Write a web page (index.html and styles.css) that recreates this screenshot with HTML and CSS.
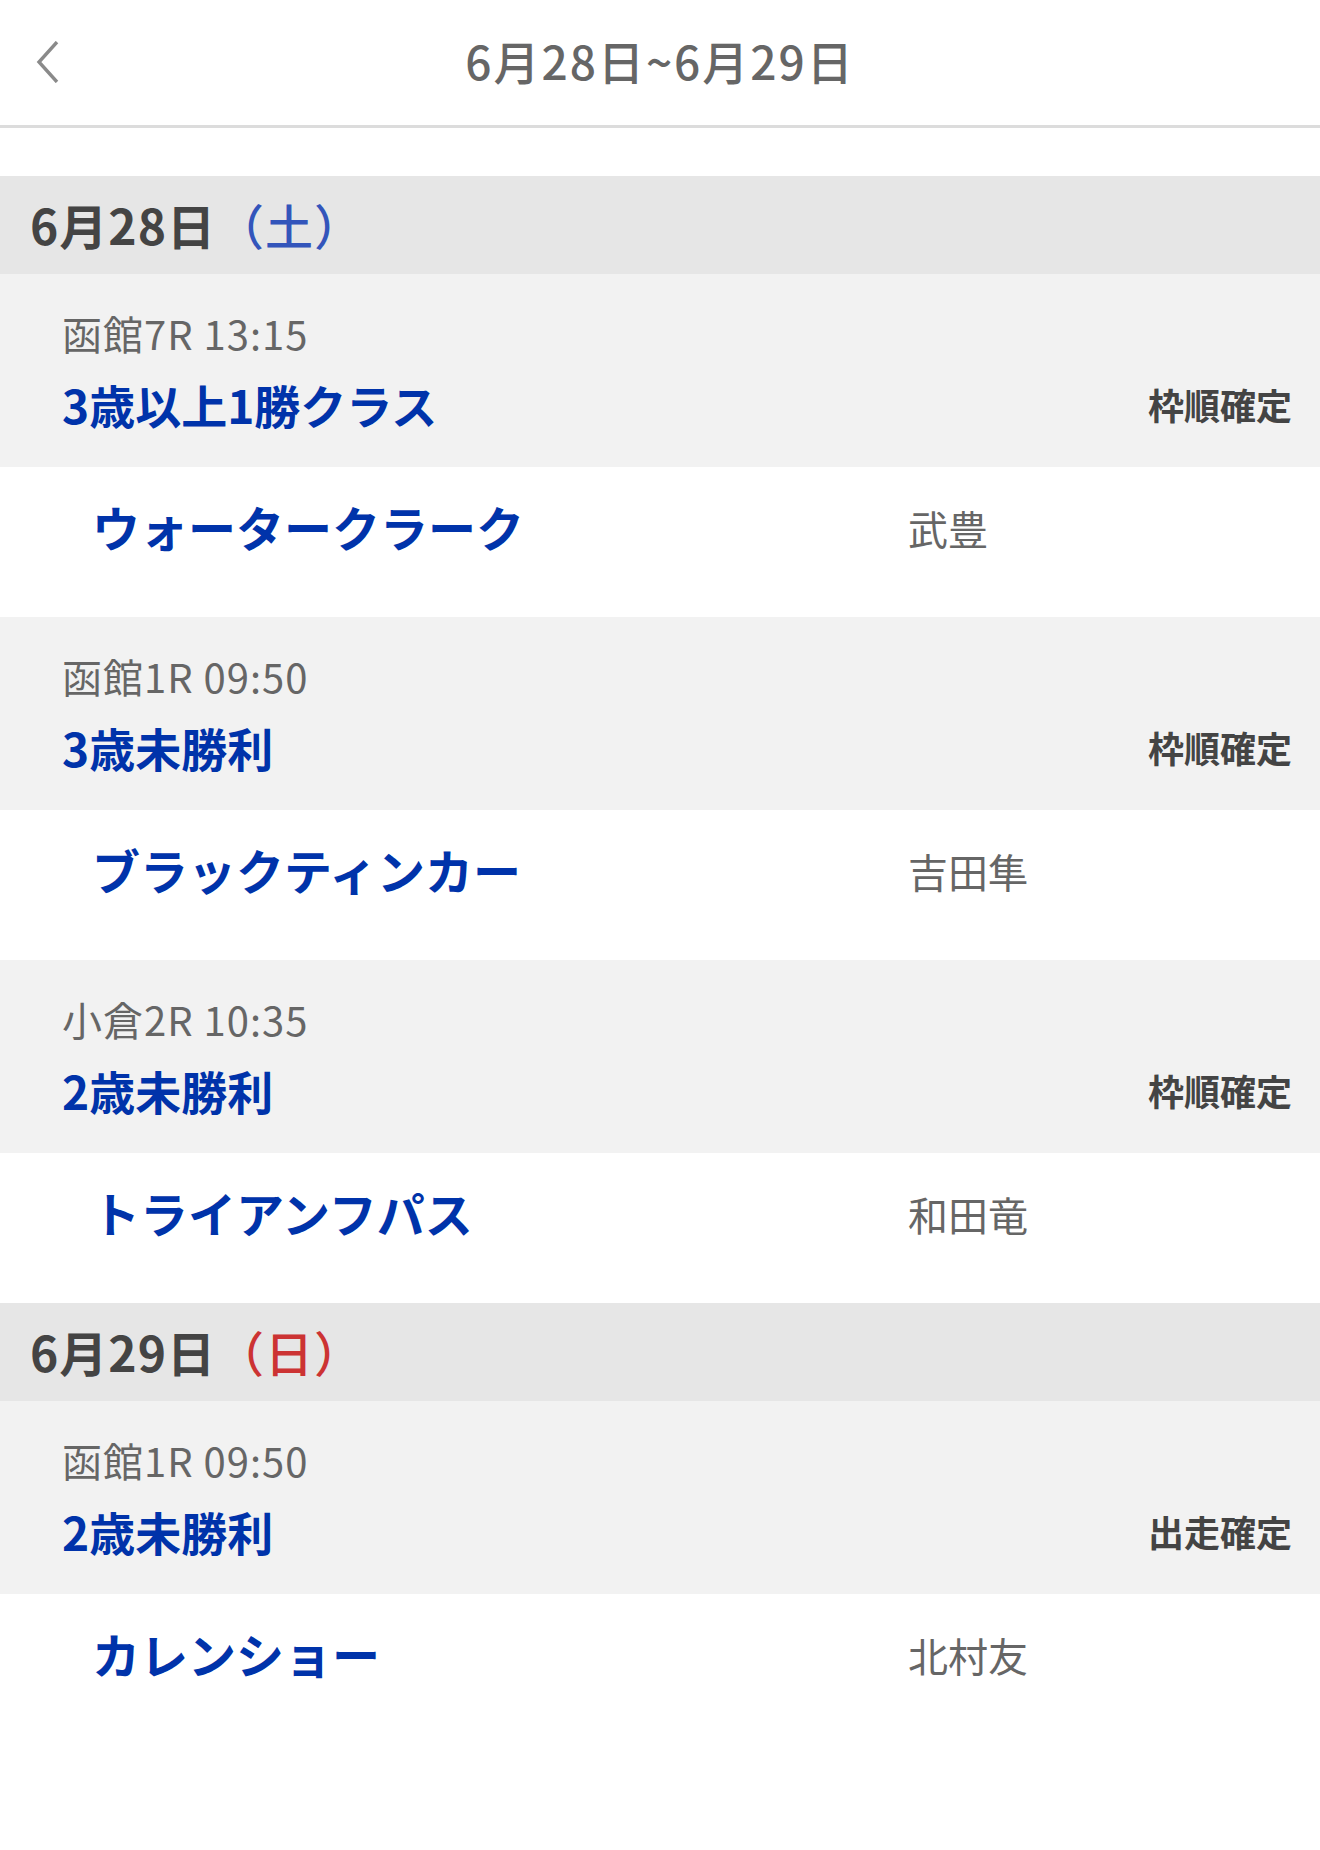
FILE: index.html
```html
<!DOCTYPE html>
<html lang="ja">
<head>
<meta charset="utf-8">
<link rel="stylesheet" href="styles.css">
</head>
<body>
<header class="topbar">
  <span class="back"><svg width="26" height="42" viewBox="0 0 26 42"><polyline points="22,1 4,21 22,41" fill="none" stroke="#8a8a8a" stroke-width="3.4"/></svg></span>
  <h1 class="title">6月28日~6月29日</h1>
</header>
<div class="spacer"></div>

<section>
  <div class="date-head">6月28日<span class="sat">（土）</span></div>

  <div class="race">
    <div class="meta">函館7R 13:15</div>
    <div class="race-row"><span class="race-name">3歳以上1勝クラス</span><span class="status">枠順確定</span></div>
  </div>
  <div class="horse"><span class="horse-name">ウォータークラーク</span><span class="jockey">武豊</span></div>

  <div class="race">
    <div class="meta">函館1R 09:50</div>
    <div class="race-row"><span class="race-name">3歳未勝利</span><span class="status">枠順確定</span></div>
  </div>
  <div class="horse"><span class="horse-name">ブラックティンカー</span><span class="jockey">吉田隼</span></div>

  <div class="race">
    <div class="meta">小倉2R 10:35</div>
    <div class="race-row"><span class="race-name">2歳未勝利</span><span class="status">枠順確定</span></div>
  </div>
  <div class="horse"><span class="horse-name">トライアンフパス</span><span class="jockey">和田竜</span></div>
</section>

<section>
  <div class="date-head">6月29日<span class="sun">（日）</span></div>

  <div class="race">
    <div class="meta">函館1R 09:50</div>
    <div class="race-row"><span class="race-name">2歳未勝利</span><span class="status">出走確定</span></div>
  </div>
  <div class="horse"><span class="horse-name">カレンショー</span><span class="jockey">北村友</span></div>
</section>
</body>
</html>
```

FILE: styles.css
```css
* { box-sizing: border-box; }
html, body { margin: 0; padding: 0; background: #fff; }
body {
  font-family: "Noto Sans CJK JP", "Noto Sans", sans-serif;
  width: 1320px;
}
.topbar {
  height: 128px;
  border-bottom: 3px solid #dcdcdc;
  display: flex;
  align-items: center;
  justify-content: center;
  position: relative;
  padding-bottom: 6px;
}
.back {
  position: absolute;
  left: 35px;
  top: 41px;
  display: flex;
}
.title {
  margin: 0;
  font-size: 46px;
  font-weight: 500;
  color: #666;
  letter-spacing: 2px;
  line-height: 1;
}
.spacer { height: 48px; }
.date-head {
  background: #e6e6e6;
  height: 98px;
  display: flex;
  align-items: center;
  padding-left: 30px;
  padding-bottom: 2px;
  font-size: 48px;
  font-weight: 700;
  color: #444;
  letter-spacing: 1px;
}
.sat { color: #3355bb; font-weight: 500; }
.sun { color: #cc3333; font-weight: 500; }
.race {
  background: #f2f2f2;
  height: 193px;
  padding: 34px 28px 0 62px;
}
.meta {
  font-size: 40px;
  line-height: 50px;
  color: #666;
  letter-spacing: 1px;
}
.race-row {
  margin-top: 16px;
  height: 60px;
  display: flex;
  align-items: center;
  justify-content: space-between;
}
.race-name {
  font-size: 46px;
  font-weight: 700;
  color: #0033aa;
}
.status {
  font-size: 36px;
  font-weight: 700;
  color: #444;
}
.horse {
  height: 150px;
  padding: 28px 0 0 92px;
  display: grid;
  grid-template-columns: 816px 1fr;
  align-items: start;
}
.horse-name {
  font-size: 48px;
  line-height: 62px;
  font-weight: 700;
  color: #0033aa;
}
.jockey {
  font-size: 40px;
  line-height: 62px;
  color: #666;
  margin-top: 2px;
}
```
